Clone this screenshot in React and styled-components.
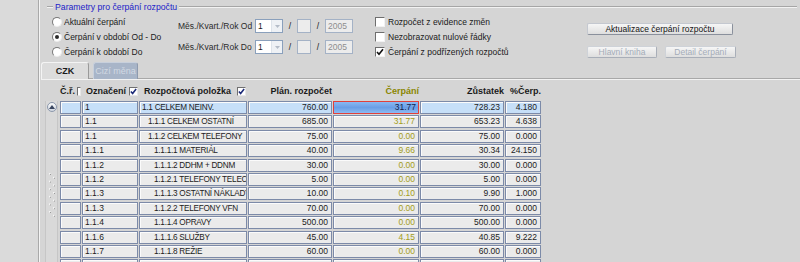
import React from "react";
import styled, { createGlobalStyle } from "styled-components";

const GlobalStyle = createGlobalStyle`
  html, body { margin: 0; padding: 0; background: #d5d5d5; }
  body {
    font-family: "Liberation Sans", Arial, sans-serif;
    font-size: 8.5px;
    color: #1a1a1a;
  }
`;

const rows = [
  ["1", "1.1 CELKEM NEINV.", 0, "760.00", "31.77", "728.23", "4.180"],
  ["1.1", "1.1.1 CELKEM OSTATNÍ", 1, "685.00", "31.77", "653.23", "4.638"],
  ["1.1", "1.1.2 CELKEM TELEFONY", 1, "75.00", "0.00", "75.00", "0.000"],
  ["1.1.1", "1.1.1.1 MATERIÁL", 2, "40.00", "9.66", "30.34", "24.150"],
  ["1.1.2", "1.1.1.2 DDHM + DDNM", 2, "30.00", "0.00", "30.00", "0.000"],
  ["1.1.2", "1.1.2.1 TELEFONY TELECOM", 2, "5.00", "0.00", "5.00", "0.000"],
  ["1.1.3", "1.1.1.3 OSTATNÍ NÁKLADY", 2, "10.00", "0.10", "9.90", "1.000"],
  ["1.1.3", "1.1.2.2 TELEFONY VFN", 2, "70.00", "0.00", "70.00", "0.000"],
  ["1.1.4", "1.1.1.4 OPRAVY", 2, "500.00", "0.00", "500.00", "0.000"],
  ["1.1.6", "1.1.1.6 SLUŽBY", 2, "45.00", "4.15", "40.85", "9.222"],
  ["1.1.7", "1.1.1.8 REŽIE", 2, "60.00", "0.00", "60.00", "0.000"],
  ["", "", 0, "", "", "", ""],
];

const App = () => {
  return (
    <Page>
      <GlobalStyle />
      <LeftStrip />
      <Main>
        <Group>
          <GroupHeader>
            <Rule $w="6px" />
            <Legend>Parametry pro čerpání rozpočtu</Legend>
            <Rule />
          </GroupHeader>
          <GroupBody>
            <OptionList>
              <Option>
                <Radio />
                Aktuální čerpání
              </Option>
              <Option>
                <Radio $on />
                Čerpání v období Od - Do
              </Option>
              <Option>
                <Radio />
                Čerpání k období Do
              </Option>
            </OptionList>

            <FieldList>
              {["Od", "Do"].map((s) => (
                <FieldRow key={s}>
                  <FieldLabel>Měs./Kvart./Rok {s}</FieldLabel>
                  <Select>
                    <SelectValue>1</SelectValue>
                    <SelectArrow>
                      <svg width="5" height="3" viewBox="0 0 5 3">
                        <path d="M0 0 L5 0 L2.5 3 Z" fill="#b4bcc8" />
                      </svg>
                    </SelectArrow>
                  </Select>
                  <Slash>/</Slash>
                  <InputBox $w="14px" />
                  <Slash>/</Slash>
                  <InputBox $w="28px">2005</InputBox>
                </FieldRow>
              ))}
            </FieldList>

            <OptionList>
              <Option $gap="3px">
                <Check />
                Rozpočet z evidence změn
              </Option>
              <Option $gap="3px">
                <Check />
                Nezobrazovat nulové řádky
              </Option>
              <Option $gap="3px">
                <Check $on />
                Čerpání z podřízených rozpočtů
              </Option>
            </OptionList>

            <ButtonColumn>
              <Button $w="146px">Aktualizace čerpání rozpočtu</Button>
              <ButtonRow>
                <Button $w="70px" disabled>
                  Hlavní kniha
                </Button>
                <Button $w="71px" disabled>
                  Detail čerpání
                </Button>
              </ButtonRow>
            </ButtonColumn>
          </GroupBody>
        </Group>

        <TabBar>
          <Tab $active>CZK</Tab>
          <Tab>Cizí měna</Tab>
        </TabBar>

        <Panel>
          <HeadGrid>
            <HeadCell $align="flex-end">
              Č.ř.
              <SmallCheck />
            </HeadCell>
            <HeadCell $pad="0 0 0 4px" $align="space-between">
              Označení
              <SmallCheck $on />
            </HeadCell>
            <HeadCell $pad="0 1px 0 5px" $align="space-between">
              Rozpočtová položka
              <SmallCheck $on />
            </HeadCell>
            <HeadCell $align="flex-end">Plán. rozpočet</HeadCell>
            <HeadCell $align="flex-end" $color="#8a8600">
              Čerpání
            </HeadCell>
            <HeadCell $align="flex-end">Zůstatek</HeadCell>
            <HeadCell $align="flex-end">%Čerp.</HeadCell>
          </HeadGrid>

          <PanelBody>
            <ScrollStrip>
              <UpButton>
                <svg width="6" height="4" viewBox="0 0 6 4">
                  <path d="M0 4 L3 0 L6 4 Z" fill="#3a4660" />
                </svg>
              </UpButton>
              <Grip>
                <svg width="8" height="46" viewBox="0 0 8 46">
                  {Array.from({ length: 12 }).map((_, i) => (
                    <g key={i}>
                      <rect x={i % 2 ? 5 : 1} y={i * 3.8 + 1} width="1.5" height="1.5" fill="#f6f6f6" />
                      <rect x={i % 2 ? 6 : 2} y={i * 3.8 + 2} width="1" height="1" fill="#9a9a9a" />
                    </g>
                  ))}
                </svg>
              </Grip>
            </ScrollStrip>

            <Grid>
              {rows.map((r, i) => {
                const sel = i === 0;
                const bg = sel ? "#c6dff8" : "#ebebeb";
                return (
                  <React.Fragment key={i}>
                    <Cell $bg={bg} />
                    <Cell $bg={bg}>{r[0]}</Cell>
                    <Cell $bg={bg} $indent={r[2] * 6} $tight>
                      {r[1]}
                    </Cell>
                    <Cell $bg={bg} $right>
                      {r[3]}
                    </Cell>
                    {sel ? (
                      <FocusCell>{r[4]}</FocusCell>
                    ) : (
                      <Cell $bg={bg} $right $color="#a39d18">
                        {r[4]}
                      </Cell>
                    )}
                    <Cell $bg={bg} $right>
                      {r[5]}
                    </Cell>
                    <Cell $bg={bg} $right>
                      {r[6]}
                    </Cell>
                  </React.Fragment>
                );
              })}
            </Grid>
          </PanelBody>
        </Panel>
      </Main>
    </Page>
  );
};

const Page = styled.div`
  display: flex;
  width: 800px;
  height: 262px;
  overflow: hidden;
`;

const LeftStrip = styled.div`
  width: 38px;
  flex-shrink: 0;
  background: #dadada;
  border-right: 1px solid #a9a9a9;
  box-shadow: 1px 0 0 #f4f4f4;
`;

const Main = styled.div`
  flex: 1;
  padding-left: 1px;
  display: flex;
  flex-direction: column;
  min-width: 0;
`;

const Group = styled.div`
  flex-shrink: 0;
  margin: 0 3px 0 7px;
`;

const GroupHeader = styled.div`
  display: flex;
  align-items: center;
  height: 14px;
`;

const Rule = styled.div`
  width: ${(p) => p.$w || "auto"};
  flex: ${(p) => (p.$w ? "none" : 1)};
  height: 0;
  border-top: 1px solid #a6a6a6;
  border-bottom: 1px solid #f2f2f2;
`;

const Legend = styled.span`
  color: #2222c8;
  font-size: 8.7px;
  padding: 0 2px 0 2px;
  line-height: 14px;
`;

const GroupBody = styled.div`
  display: grid;
  grid-template-columns: 126px 197px 212px 1fr;
  padding-left: 5px;
  height: 48px;
`;

const OptionList = styled.div`
  display: flex;
  flex-direction: column;
`;

const Option = styled.div`
  display: flex;
  align-items: center;
  gap: ${(p) => p.$gap || "2px"};
  height: 15px;
  white-space: nowrap;
`;

const Radio = styled.span`
  width: 10px;
  height: 10px;
  box-sizing: border-box;
  border-radius: 50%;
  border: 1px solid;
  border-color: #7a7a7a #f0f0f0 #f0f0f0 #7a7a7a;
  background: radial-gradient(circle, #fff 60%, #e6e6e6 100%);
  display: flex;
  align-items: center;
  justify-content: center;
  &::after {
    content: "";
    width: 4px;
    height: 4px;
    border-radius: 50%;
    background: #2a2a2a;
    display: ${(p) => (p.$on ? "block" : "none")};
  }
`;

const Check = ({ $on }) => (
  <CheckBox>
    {$on && (
      <svg width="8" height="8" viewBox="0 0 8 8">
        <path d="M1 4 L3 6.3 L7 1.2" stroke="#111" strokeWidth="1.6" fill="none" />
      </svg>
    )}
  </CheckBox>
);

const CheckBox = styled.span`
  width: 10px;
  height: 10px;
  box-sizing: border-box;
  border: 1px solid;
  border-color: #6e6e6e #f2f2f2 #f2f2f2 #6e6e6e;
  background: #fff;
  display: flex;
  align-items: center;
  justify-content: center;
  flex-shrink: 0;
`;

const SmallCheck = ({ $on }) => (
  <SmallCheckBox>
    {$on && (
      <svg width="7" height="7" viewBox="0 0 8 8">
        <path d="M1 4 L3 6.3 L7 1.2" stroke="#1c2a78" strokeWidth="1.8" fill="none" />
      </svg>
    )}
  </SmallCheckBox>
);

const SmallCheckBox = styled.span`
  width: 9px;
  height: 9px;
  box-sizing: border-box;
  border: 1px solid;
  border-color: #707070 #e8e8e8 #e8e8e8 #707070;
  background: #fff;
  display: flex;
  align-items: center;
  justify-content: center;
  margin-left: 2px;
`;

const FieldList = styled.div`
  display: flex;
  flex-direction: column;
  gap: 7px;
  padding-top: 5px;
`;

const FieldRow = styled.div`
  display: flex;
  align-items: center;
  height: 14px;
`;

const FieldLabel = styled.span`
  width: 77px;
  white-space: nowrap;
  color: #2a2a2a;
`;

const Select = styled.div`
  width: 28px;
  height: 14px;
  box-sizing: border-box;
  border: 1px solid #8aa0bc;
  background: #fff;
  display: flex;
`;

const SelectValue = styled.span`
  flex: 1;
  padding-left: 2px;
  line-height: 12px;
`;

const SelectArrow = styled.span`
  width: 10px;
  background: #eef1f5;
  border-left: 1px solid #dde3ea;
  display: flex;
  align-items: center;
  justify-content: center;
`;

const Slash = styled.span`
  width: 14px;
  text-align: center;
`;

const InputBox = styled.div`
  width: ${(p) => p.$w};
  height: 14px;
  box-sizing: border-box;
  border: 1px solid #a4b2c6;
  background: #ececec;
  color: #8e8e8e;
  padding-left: 2px;
  line-height: 12px;
`;

const ButtonColumn = styled.div`
  display: flex;
  flex-direction: column;
  gap: 11px;
  padding-top: 9px;
`;

const ButtonRow = styled.div`
  display: flex;
  gap: 8px;
`;

const Button = styled.button`
  width: ${(p) => p.$w};
  height: 12px;
  padding: 0;
  font: inherit;
  line-height: 10px;
  color: #141414;
  background: linear-gradient(#f6f6f6, #dedede);
  border: 1px solid;
  border-color: #c4c8d0 #8a909c #8a909c #c4c8d0;
  border-radius: 2px;
  &:disabled {
    color: #a4acb8;
    border-color: #ced2d8 #a8aeb8 #a8aeb8 #ced2d8;
  }
`;

const TabBar = styled.div`
  flex-shrink: 0;
  display: flex;
  gap: 4px;
  margin-left: 1px;
  height: 16px;
`;

const Tab = styled.div`
  width: ${(p) => (p.$active ? "48px" : "45px")};
  box-sizing: border-box;
  border-radius: 3px 3px 0 0;
  border: 1px solid;
  border-bottom: none;
  border-color: ${(p) => (p.$active ? "#f4f4f4 #9a9a9a #9a9a9a #f4f4f4" : "#c8d0dc #8e9aae #8e9aae #c8d0dc")};
  background: ${(p) => (p.$active ? "#dcdcdc" : "#a8b5c8")};
  color: ${(p) => (p.$active ? "#1a1a1a" : "#d2d9e3")};
  font-weight: ${(p) => (p.$active ? "bold" : "normal")};
  font-size: 9px;
  display: flex;
  align-items: center;
  justify-content: center;
  position: relative;
  z-index: 1;
  margin-bottom: -1px;
`;

const Panel = styled.div`
  flex: 1;
  min-height: 0;
  margin-left: 1px;
  border-top: 1px solid #a8a8a8;
  box-shadow: inset 0 1px 0 #f2f2f2;
  padding-top: 6px;
  display: flex;
  flex-direction: column;
`;

const columns = "21px 56px 108px 84px 86px 84px 36px";

const HeadGrid = styled.div`
  flex-shrink: 0;
  display: grid;
  grid-template-columns: ${columns};
  column-gap: 1px;
  margin-left: 19px;
  height: 12px;
`;

const HeadCell = styled.div`
  display: flex;
  align-items: center;
  justify-content: ${(p) => p.$align};
  padding: ${(p) => p.$pad || "0"};
  font-weight: bold;
  font-size: 9px;
  color: ${(p) => p.$color || "#1a1a1a"};
  white-space: nowrap;
`;

const PanelBody = styled.div`
  display: flex;
  margin-top: 4px;
  flex: 1;
  min-height: 0;
`;

const ScrollStrip = styled.div`
  width: 13px;
  flex-shrink: 0;
  margin-left: 4px;
  margin-right: 2px;
  box-sizing: border-box;
  background: #d9d9d9;
  border-left: 1px solid #c6c6c6;
  border-right: 1px solid #c6c6c6;
  display: flex;
  flex-direction: column;
  align-items: center;
`;

const UpButton = styled.div`
  margin-top: 1px;
  width: 10px;
  height: 10px;
  box-sizing: border-box;
  border-radius: 50%;
  border: 1px solid #8c98ac;
  background: linear-gradient(#fafafa, #d0d6e0);
  display: flex;
  align-items: center;
  justify-content: center;
`;

const Grip = styled.div`
  margin-top: 60px;
`;

const Grid = styled.div`
  display: grid;
  grid-template-columns: ${columns};
  grid-auto-rows: 13px;
  column-gap: 1px;
  row-gap: 1.4px;
  align-content: start;
`;

const Cell = styled.div`
  box-sizing: border-box;
  border: 1px solid #7c8aa8;
  box-shadow: inset 1px 1px 0 #fbfbfb;
  background: ${(p) => p.$bg};
  color: ${(p) => p.$color || "#1c1c1c"};
  text-align: ${(p) => (p.$right ? "right" : "left")};
  padding: 0 3px 0 ${(p) => 2 + (p.$indent || 0)}px;
  font-size: ${(p) => (p.$tight ? "8.2px" : "8.5px")};
  letter-spacing: ${(p) => (p.$tight ? "-0.25px" : "0")};
  line-height: 11px;
  white-space: nowrap;
  overflow: hidden;
`;

const FocusCell = styled.div`
  box-sizing: border-box;
  border: 1px solid #e0403c;
  background: linear-gradient(#8ab8f2, #6a9ee6 50%, #8cbaf2);
  color: #10204a;
  text-align: right;
  padding: 0 2px;
  line-height: 11px;
`;

export default App;
